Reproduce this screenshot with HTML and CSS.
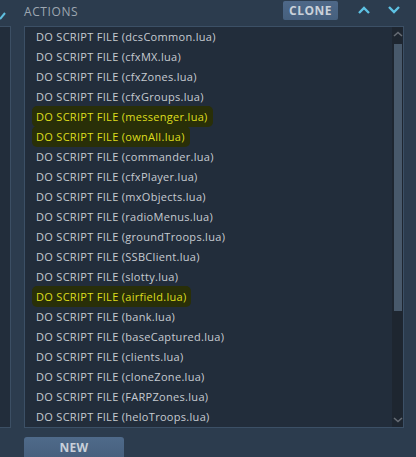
FILE: index.html
```html
<!DOCTYPE html>
<html>
<head>
<meta charset="utf-8">
<link rel="stylesheet" href="styles.css">
</head>
<body>
<div class="page">
  <div class="side">
    <svg class="tick" width="6" height="8" viewBox="0 0 6 8"><path d="M0 7 L5 1" stroke="#5fbfe0" stroke-width="2" fill="none"/></svg>
    <div class="side-box"></div>
  </div>
  <div class="main">
    <div class="header">
      <span class="title">ACTIONS</span>
      <button class="clone">CLONE</button>
      <div class="arrows">
        <svg width="14" height="10" viewBox="0 0 14 10"><path d="M2 8 L7 3 L12 8" stroke="#5ec2e4" stroke-width="2.4" fill="none"/></svg>
        <svg width="14" height="10" viewBox="0 0 14 10"><path d="M2 2 L7 7 L12 2" stroke="#5ec2e4" stroke-width="2.4" fill="none"/></svg>
      </div>
    </div>
    <div class="listbox">
      <ul class="list">
        <li>DO SCRIPT FILE (dcsCommon.lua)</li>
        <li>DO SCRIPT FILE (cfxMX.lua)</li>
        <li>DO SCRIPT FILE (cfxZones.lua)</li>
        <li>DO SCRIPT FILE (cfxGroups.lua)</li>
        <li><span class="hl">DO SCRIPT FILE (messenger.lua)</span></li>
        <li><span class="hl">DO SCRIPT FILE (ownAll.lua)</span></li>
        <li>DO SCRIPT FILE (commander.lua)</li>
        <li>DO SCRIPT FILE (cfxPlayer.lua)</li>
        <li>DO SCRIPT FILE (mxObjects.lua)</li>
        <li>DO SCRIPT FILE (radioMenus.lua)</li>
        <li>DO SCRIPT FILE (groundTroops.lua)</li>
        <li>DO SCRIPT FILE (SSBClient.lua)</li>
        <li>DO SCRIPT FILE (slotty.lua)</li>
        <li><span class="hl">DO SCRIPT FILE (airfield.lua)</span></li>
        <li>DO SCRIPT FILE (bank.lua)</li>
        <li>DO SCRIPT FILE (baseCaptured.lua)</li>
        <li>DO SCRIPT FILE (clients.lua)</li>
        <li>DO SCRIPT FILE (cloneZone.lua)</li>
        <li>DO SCRIPT FILE (FARPZones.lua)</li>
        <li>DO SCRIPT FILE (heloTroops.lua)</li>
      </ul>
      <div class="scrollbar">
        <svg class="sarrow" width="10" height="6" viewBox="0 0 10 6"><path d="M1 5 L5 1.5 L9 5" stroke="#666c74" stroke-width="1.6" fill="none"/></svg>
        <div class="track"><div class="thumb"></div></div>
        <svg class="sarrow" width="10" height="6" viewBox="0 0 10 6"><path d="M1 1 L5 4.5 L9 1" stroke="#666c74" stroke-width="1.6" fill="none"/></svg>
      </div>
    </div>
    <div class="footer">
      <button class="new">NEW</button>
    </div>
  </div>
</div>
</body>
</html>
```

FILE: styles.css
```css
html, body {
  margin: 0;
  padding: 0;
  background: #2c3c4e;
  width: 416px;
  height: 457px;
  overflow: hidden;
}
.page {
  display: flex;
  gap: 13px;
  font-family: "Open Sans", "DejaVu Sans", sans-serif;
}
.side {
  width: 11px;
  flex: none;
  display: flex;
  flex-direction: column;
}
.tick {
  margin-top: 6px;
  height: 20px;
}
.side-box {
  height: 400px;
  background: #222d3b;
  border: 1px solid #3c4f64;
  border-left: none;
}
.main {
  width: 380px;
  flex: none;
  display: flex;
  flex-direction: column;
}
.header {
  height: 26px;
  display: flex;
  align-items: flex-start;
}
.title {
  color: #9ea7b1;
  font-size: 12px;
  line-height: 14px;
  margin-top: 5px;
  flex: 1;
  letter-spacing: 0.6px;
}
.clone {
  flex: none;
  width: 55px;
  height: 19px;
  margin-top: 1px;
  border: none;
  border-radius: 2px;
  background: linear-gradient(#4e6888, #46607e);
  color: #c9d1da;
  font-family: "Open Sans", "DejaVu Sans", sans-serif;
  font-weight: 700;
  font-size: 12px;
  letter-spacing: 0.5px;
  padding: 0;
  line-height: 19px;
}
.arrows {
  flex: none;
  display: flex;
  gap: 16px;
  margin-left: 19px;
  margin-right: 3px;
  margin-top: 5px;
}
.arrows svg {
  flex: none;
  display: block;
}
.listbox {
  height: 400px;
  border: 1px solid #3c5066;
  background: #222d3b;
  display: flex;
}
.list {
  flex: 1;
  list-style: none;
  margin: 0;
  padding: 0 0 0 11px;
}
.list li {
  height: 20px;
  line-height: 20px;
  font-size: 11px;
  color: #c6cbd1;
  white-space: nowrap;
  letter-spacing: 0.3px;
}
.hl {
  color: #dede1e;
  background: #292f08;
  padding: 3px 5px 3px 4px;
  margin-left: -4px;
  border-radius: 5px;
}
.scrollbar {
  width: 11px;
  background: #1e2630;
  display: flex;
  flex-direction: column;
  align-items: center;
}
.sarrow {
  margin: 4px 0;
}
.track {
  flex: 1;
  width: 8px;
  padding-top: 3px;
}
.thumb {
  height: 267px;
  background: #48596b;
}
.footer {
  padding-top: 7px;
}
.new {
  width: 100px;
  height: 30px;
  border: none;
  border-radius: 3px 3px 0 0;
  background: linear-gradient(#4f6a8a, #435b78);
  color: #c8d0d9;
  font-family: "Open Sans", "DejaVu Sans", sans-serif;
  font-weight: 700;
  font-size: 12px;
  padding: 0 0 8px 0;
  letter-spacing: 0.3px;
}
```
